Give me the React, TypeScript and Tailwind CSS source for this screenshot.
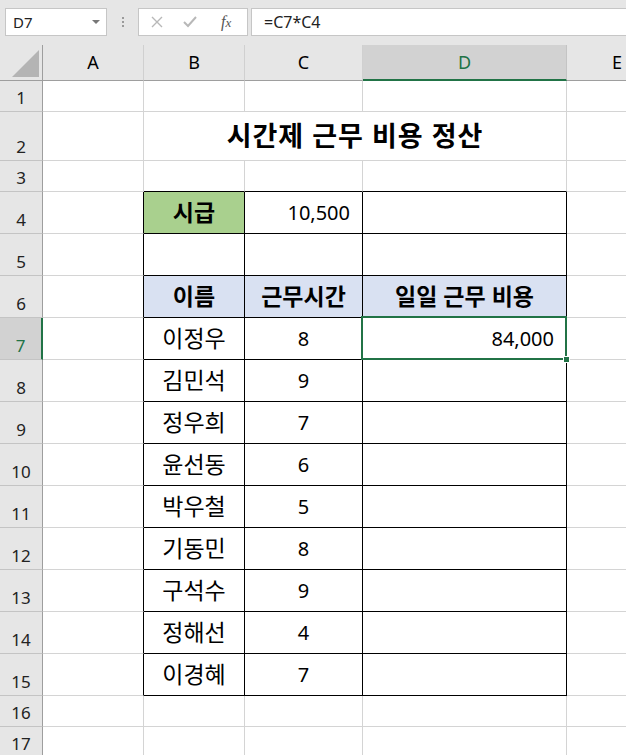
import React from 'react'

const COLS = ['A', 'B', 'C', 'D', 'E']
const ROW_H: Record<number, string> = {
  1: 'h-[31px]',
  2: 'h-[49px]',
  3: 'h-[31px]',
  16: 'h-[31px]',
  17: 'h-[31px]',
}

const people: [string, number][] = [
  ['이정우', 8],
  ['김민석', 9],
  ['정우희', 7],
  ['윤선동', 6],
  ['박우철', 5],
  ['기동민', 8],
  ['구석수', 9],
  ['정해선', 4],
  ['이경혜', 7],
]

// table range B4:D15 gets black borders
const inTable = (r: number, c: number) => r >= 4 && r <= 15 && c >= 1 && c <= 3

function Cell({
  r,
  c,
  className = '',
  children,
}: {
  r: number
  c: number
  className?: string
  children?: React.ReactNode
}) {
  const right = inTable(r, c) || inTable(r, c + 1) ? 'border-r-black' : 'border-r-[#d4d4d4]'
  const bottom = inTable(r, c) || inTable(r + 1, c) ? 'border-b-black' : 'border-b-[#d4d4d4]'
  return (
    <div
      className={`box-border border-r border-b ${right} ${bottom} ${ROW_H[r] ?? 'h-[42px]'} flex items-center text-[20px] text-black ${className}`}
    >
      {children}
    </div>
  )
}

function RowHead({ r }: { r: number }) {
  const sel = r === 7
  return (
    <div
      className={`box-border border-b border-b-[#c4c4c4] ${ROW_H[r] ?? 'h-[42px]'} flex items-end justify-center pb-[5px] text-[17px] leading-none ${
        sel ? 'bg-[#d2d2d2] border-r-2 border-r-[#217346] text-[#217346]' : 'bg-[#e6e6e6] border-r border-r-[#9e9e9e] text-[#222]'
      }`}
    >
      {r}
    </div>
  )
}

function Row({ r, cells }: { r: number; cells: React.ReactNode[] }) {
  return (
    <>
      <RowHead r={r} />
      {cells}
    </>
  )
}

const ko = 'text-[23px]'

export default function App() {
  const rows: React.ReactNode[] = []

  rows.push(<Row key={1} r={1} cells={COLS.map((_, c) => <Cell key={c} r={1} c={c} />)} />)
  rows.push(
    <Row
      key={2}
      r={2}
      cells={[
        <Cell key={0} r={2} c={0} />,
        <div
          key={1}
          className="col-span-3 box-border border-r border-b border-[#d4d4d4] h-[49px] flex items-center justify-center text-[27px] font-bold text-black tracking-[1px]"
        >
          시간제 근무 비용 정산
        </div>,
        <Cell key={4} r={2} c={4} />,
      ]}
    />
  )
  rows.push(<Row key={3} r={3} cells={COLS.map((_, c) => <Cell key={c} r={3} c={c} />)} />)
  rows.push(
    <Row
      key={4}
      r={4}
      cells={[
        <Cell key={0} r={4} c={0} />,
        <Cell key={1} r={4} c={1} className={`bg-[#a9d08e] justify-center font-bold ${ko}`}>
          시급
        </Cell>,
        <Cell key={2} r={4} c={2} className="justify-end pr-[12px]">
          10,500
        </Cell>,
        <Cell key={3} r={4} c={3} />,
        <Cell key={4} r={4} c={4} />,
      ]}
    />
  )
  rows.push(<Row key={5} r={5} cells={COLS.map((_, c) => <Cell key={c} r={5} c={c} />)} />)
  rows.push(
    <Row
      key={6}
      r={6}
      cells={[
        <Cell key={0} r={6} c={0} />,
        <Cell key={1} r={6} c={1} className={`bg-[#d9e1f2] justify-center font-bold ${ko}`}>
          이름
        </Cell>,
        <Cell key={2} r={6} c={2} className={`bg-[#d9e1f2] justify-center font-bold ${ko}`}>
          근무시간
        </Cell>,
        <Cell key={3} r={6} c={3} className={`bg-[#d9e1f2] justify-center font-bold ${ko}`}>
          일일 근무 비용
        </Cell>,
        <Cell key={4} r={6} c={4} />,
      ]}
    />
  )
  people.forEach(([name, hours], i) => {
    const r = 7 + i
    rows.push(
      <Row
        key={r}
        r={r}
        cells={[
          <Cell key={0} r={r} c={0} />,
          <Cell key={1} r={r} c={1} className={`justify-center ${ko}`}>
            {name}
          </Cell>,
          <Cell key={2} r={r} c={2} className="justify-center">
            {hours}
          </Cell>,
          <Cell key={3} r={r} c={3} className={r === 7 ? 'relative justify-end pr-[12px]' : ''}>
            {r === 7 && (
              <>
                84,000
                <div className="absolute -left-[2px] -top-[2px] -right-[1px] -bottom-[1px] border-2 border-[#217346]" />
                <div className="absolute -right-[4px] -bottom-[4px] w-[7px] h-[7px] bg-[#217346] border border-white" />
              </>
            )}
          </Cell>,
          <Cell key={4} r={r} c={4} />,
        ]}
      />
    )
  })
  rows.push(<Row key={16} r={16} cells={COLS.map((_, c) => <Cell key={c} r={16} c={c} />)} />)
  rows.push(<Row key={17} r={17} cells={COLS.map((_, c) => <Cell key={c} r={17} c={c} />)} />)

  return (
    <div className="w-[626px] h-[755px] overflow-hidden bg-white font-['Noto_Sans','Noto_Sans_CJK_KR',sans-serif]">
      {/* formula bar */}
      <div className="h-[45px] bg-[#e6e6e6] flex items-start pt-[8px] pl-[5px]">
        <div className="w-[102px] h-[28px] bg-white border border-[#c6c6c6] flex items-center justify-between pl-[7px] pr-[6px]">
          <span className="text-[15px] text-[#222]">D7</span>
          <svg width="8" height="5" viewBox="0 0 8 5">
            <path d="M0 0 L8 0 L4 4 Z" fill="#777" />
          </svg>
        </div>
        <div className="w-[31px] h-[28px] flex flex-col items-center justify-center gap-[2px]">
          <span className="w-[2px] h-[2px] bg-[#9a9a9a]" />
          <span className="w-[2px] h-[2px] bg-[#9a9a9a]" />
          <span className="w-[2px] h-[2px] bg-[#9a9a9a]" />
        </div>
        <div className="w-[110px] h-[28px] bg-white border border-[#c6c6c6] flex items-center pl-[12px] gap-[20px]">
          <svg width="12" height="12" viewBox="0 0 12 12">
            <path d="M1 1 L11 11 M11 1 L1 11" stroke="#b8b8b8" strokeWidth="1.4" />
          </svg>
          <svg width="14" height="12" viewBox="0 0 14 12">
            <path d="M1 6 L5 10 L13 1" stroke="#b8b8b8" strokeWidth="2" fill="none" />
          </svg>
          <span className="ml-[4px] text-[16px] italic text-[#555] font-['Liberation_Serif',serif] leading-none">
            f<span className="text-[13px]">x</span>
          </span>
        </div>
        <div className="ml-[3px] flex-1 h-[28px] bg-white border border-r-0 border-[#c6c6c6] flex items-center pl-[12px] text-[16px] text-[#222]">
          =C7*C4
        </div>
      </div>

      {/* sheet */}
      <div className="grid grid-cols-[43px_101px_101px_118px_204px_101px]">
        {/* column headers */}
        <div className="box-border h-[36px] bg-[#e6e6e6] border-r border-b border-[#9e9e9e] flex items-end justify-end pr-[3px] pb-[3px]">
          <svg width="27" height="27" viewBox="0 0 27 27">
            <path d="M27 0 L27 27 L0 27 Z" fill="#b4b4b4" />
          </svg>
        </div>
        {COLS.map((l) =>
          l === 'D' ? (
            <div
              key={l}
              className="box-border h-[36px] bg-[#d2d2d2] border-r border-r-[#c4c4c4] border-b-2 border-b-[#217346] flex items-center justify-center text-[18px] text-[#217346]"
            >
              {l}
            </div>
          ) : (
            <div
              key={l}
              className="box-border h-[36px] bg-[#e6e6e6] border-r border-r-[#d0d0d0] border-b border-b-[#9e9e9e] flex items-center justify-center text-[18px] text-black"
            >
              {l}
            </div>
          )
        )}
        {rows}
      </div>
    </div>
  )
}
